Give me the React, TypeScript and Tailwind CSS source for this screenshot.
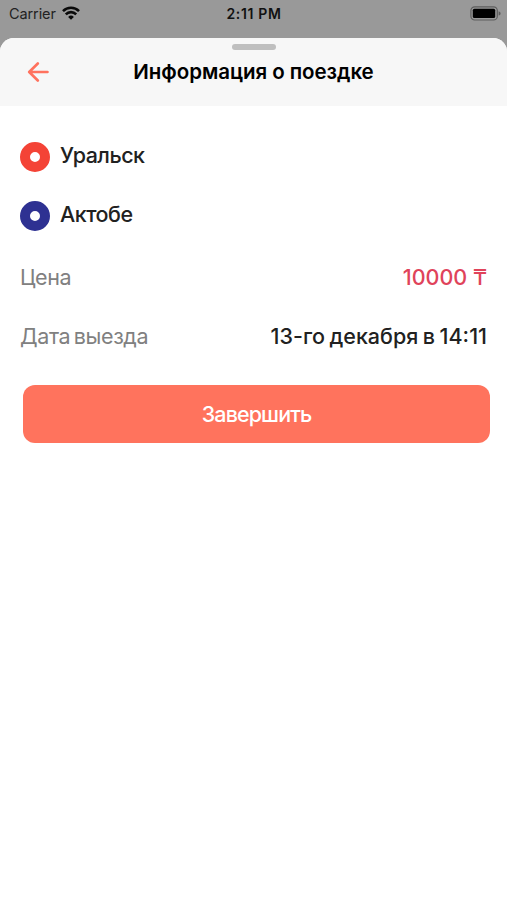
function WifiIcon() {
  return (
    <svg viewBox="0 0 18 14" className="w-[18px] h-[14px] -mt-[2px]" fill="none" stroke="#0a0a0a" strokeWidth="2.6">
      <path d="M1 5.1a11.4 11.4 0 0 1 16 0" />
      <path d="M3.8 8.3a7.400 7.400 0 0 1 10.400 0" />
      <path d="M9 13.800 6.100 10.900a4.100 4.100 0 0 1 5.800 0Z" fill="#0a0a0a" stroke="none" />
    </svg>
  );
}

function BatteryIcon() {
  return (
    <svg viewBox="0 0 31 15" className="w-[31px] h-[15px]" fill="none">
      <rect x="0.9" y="0.8" width="26.4" height="13.2" rx="3.8" stroke="#5e5e5e" strokeWidth="1.2" />
      <rect x="2.8" y="2.7" width="22.4" height="9.4" rx="1.6" fill="#000" />
      <path d="M28.6 5.2c1.4.5 2 1.3 2 2.2s-.6 1.7-2 2.2Z" fill="#5e5e5e" />
    </svg>
  );
}

function StatusBar() {
  return (
    <div className="grid grid-cols-3 items-center h-[27px] pl-[9px] pr-[6px] text-[#111]">
      <div className="flex items-center gap-[6px]">
        <span className="text-[14.5px] tracking-[-0.1px] text-[#222]">Carrier</span>
        <WifiIcon />
      </div>
      <span className="text-center text-[14px] font-semibold tracking-[0.65px] -ml-[2px]">2:11 PM</span>
      <div className="flex justify-end">
        <BatteryIcon />
      </div>
    </div>
  );
}

function Header({ title }: { title: string }) {
  return (
    <header className="h-[68px] bg-[#f7f7f7] flex flex-col items-center pt-[6px]">
      <div className="w-11 h-[6px] rounded-full bg-[#bfbfbf]" />
      <div className="grid grid-cols-[40px_1fr_40px] items-center w-full px-[27px] mt-[7px]">
        <button aria-label="Назад">
          <svg viewBox="0 0 22 20" className="w-[22px] h-5" fill="none" stroke="#ff725e" strokeWidth="2.6" strokeLinecap="round" strokeLinejoin="round">
            <path d="M10.8 1.5 2.2 10l8.6 8.500M2.5 10h18" />
          </svg>
        </button>
        <h1 className="text-center text-[20.5px] leading-[30px] font-semibold tracking-[-0.05px] text-black whitespace-nowrap">{title}</h1>
      </div>
    </header>
  );
}

const STOPS = [
  { city: "Уральск", ring: "border-[#f44336]" },
  { city: "Актобе", ring: "border-[#2e3192]" },
];

const DETAILS = [
  { label: "Цена", value: "10000 ₸", color: "text-[#e0435a]" },
  { label: "Дата выезда", value: "13-го декабря в 14:11", color: "text-[#212121] [word-spacing:-1.2px]" },
];

export default function App() {
  return (
    <div className="h-[900px] flex flex-col bg-[#999] font-['Inter','Noto_Sans',sans-serif] overflow-hidden">
      <StatusBar />
      <div className="flex-1 mt-[11px] bg-white rounded-t-[14px] overflow-hidden">
        <Header title="Информация о поездке" />
        <main className="px-5 pt-9">
          <div className="flex flex-col gap-[29px]">
            {STOPS.map((s) => (
              <div key={s.city} className="flex items-center gap-[10px] h-[30px]">
                <span className={`w-[30px] h-[30px] rounded-full bg-white border-[10px] ${s.ring}`} />
                <span className="text-[21.5px] font-medium tracking-[-0.5px] text-[#212121] -mt-[3px]">{s.city}</span>
              </div>
            ))}
          </div>
          <div className="flex flex-col gap-[29px] mt-[31px]">
            {DETAILS.map((d) => (
              <div key={d.label} className="flex items-center justify-between h-[30px]">
                <span className="text-[21.5px] tracking-[-0.4px] [word-spacing:-2px] text-[#808080]">{d.label}</span>
                <span className={`text-[21.5px] font-medium ${d.color}`}>{d.value}</span>
              </div>
            ))}
          </div>
          <button className="flex items-center justify-center ml-[3px] mt-[34px] w-[467px] h-[58px] rounded-xl bg-[#ff735d] text-white text-[21.5px] font-medium tracking-[-0.9px]">
            Завершить
          </button>
        </main>
      </div>
    </div>
  );
}
